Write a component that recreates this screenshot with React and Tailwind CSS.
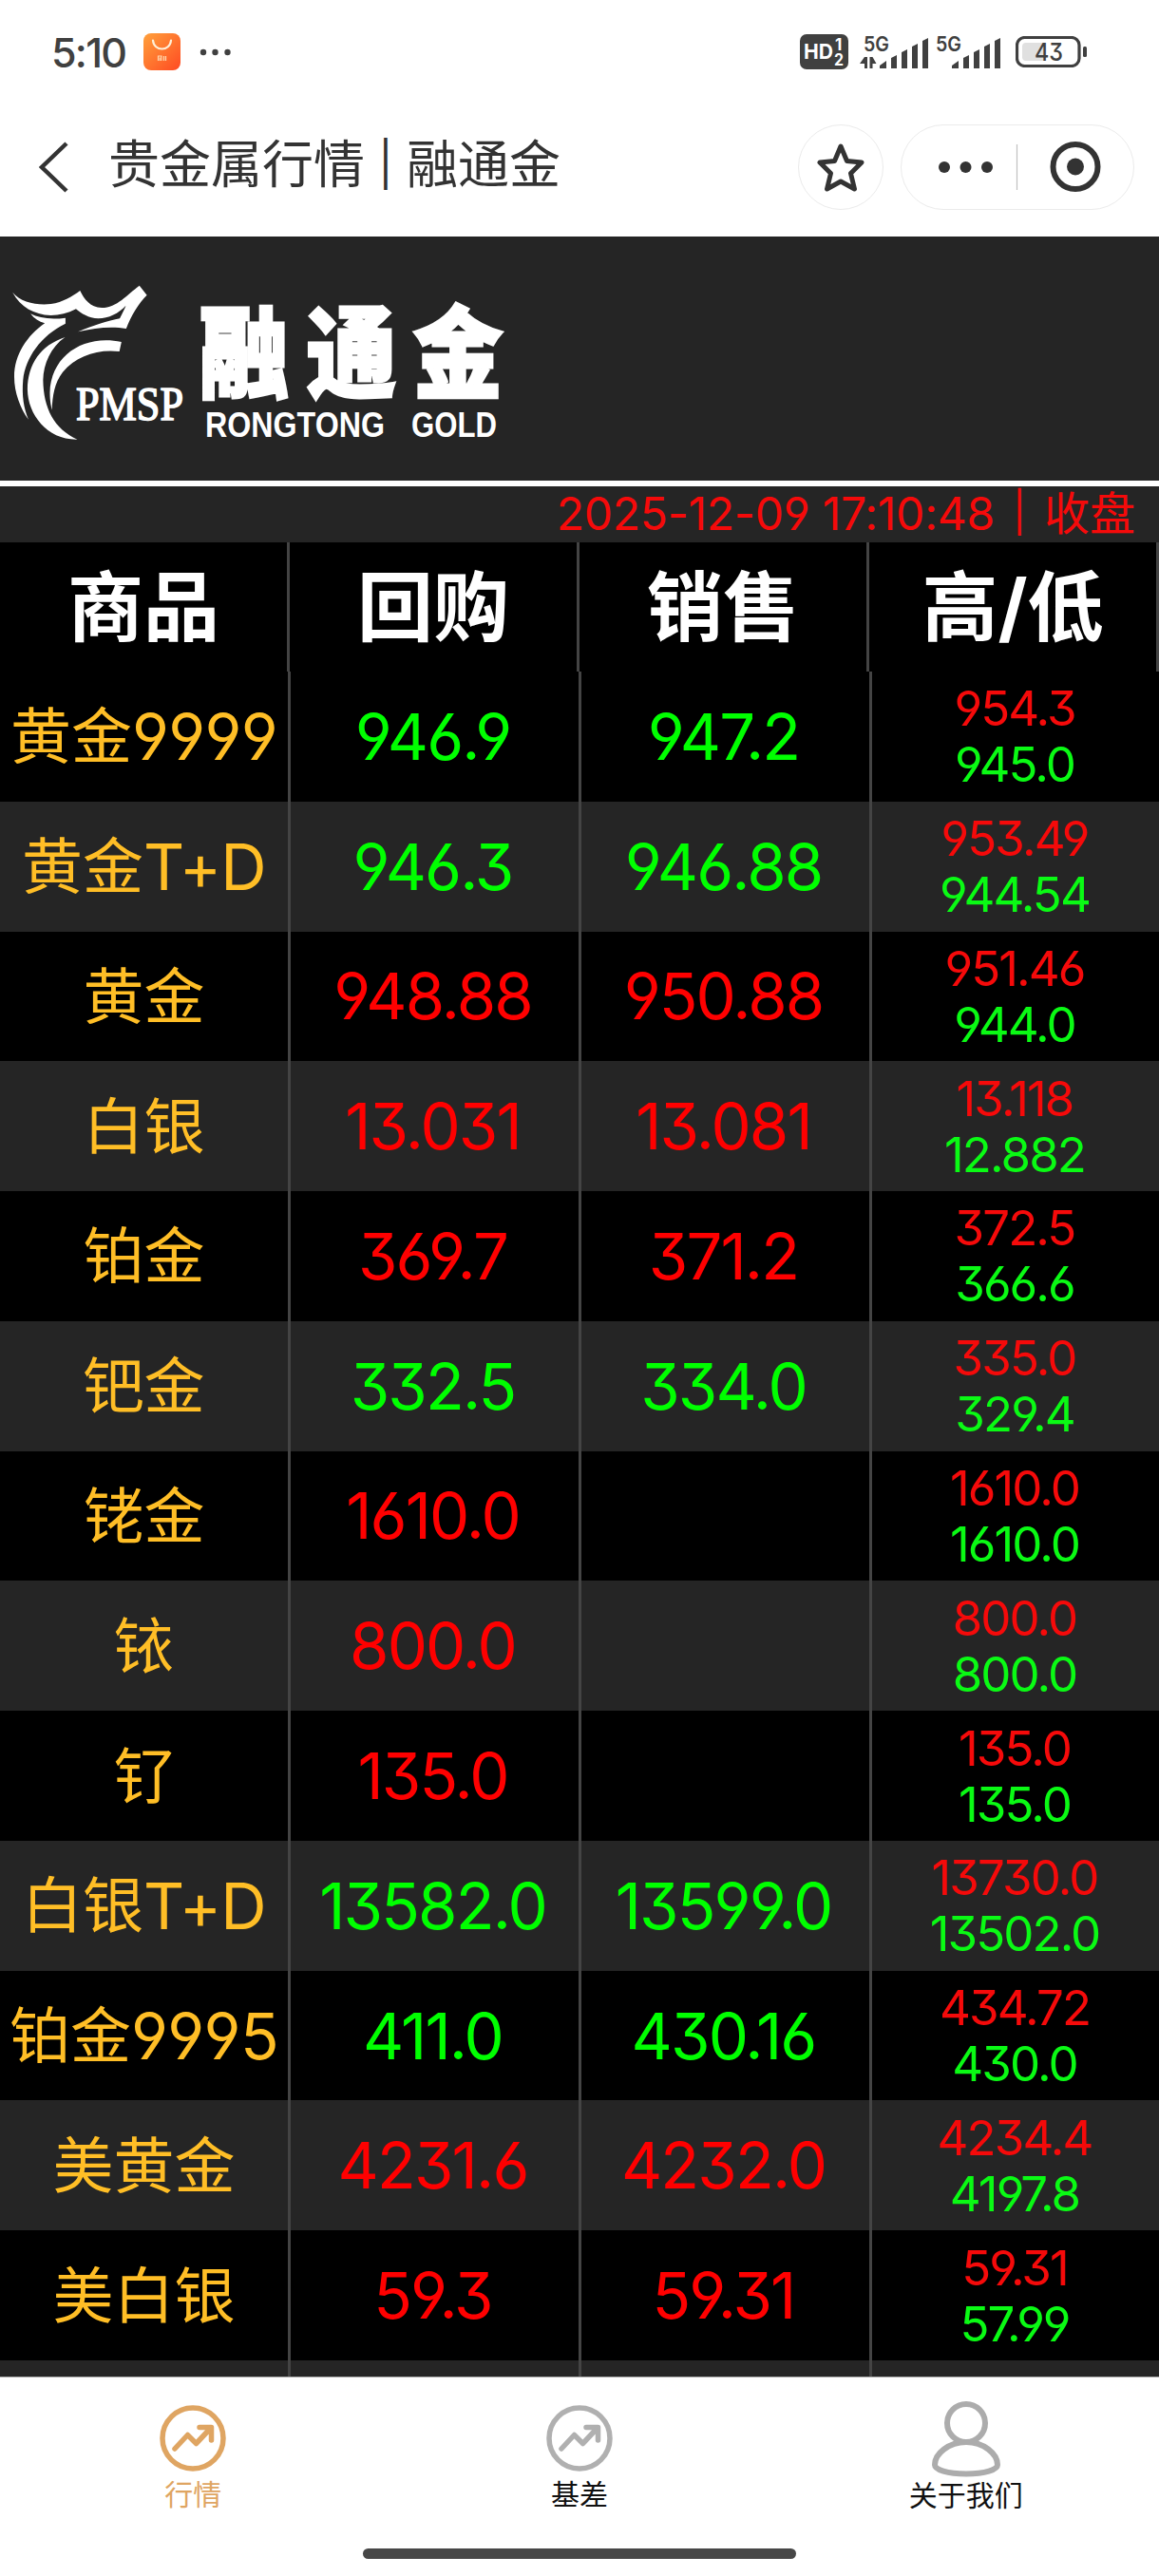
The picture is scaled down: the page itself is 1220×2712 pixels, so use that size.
import React from 'react';

const rows = [
  { name: '黄金', code: '9999', buy: '946.9', sell: '947.2', high: '954.3', low: '945.0', up: false },
  { name: '黄金', code: 'T+D', buy: '946.3', sell: '946.88', high: '953.49', low: '944.54', up: false },
  { name: '黄金', buy: '948.88', sell: '950.88', high: '951.46', low: '944.0', up: true },
  { name: '白银', buy: '13.031', sell: '13.081', high: '13.118', low: '12.882', up: true },
  { name: '铂金', buy: '369.7', sell: '371.2', high: '372.5', low: '366.6', up: true },
  { name: '钯金', buy: '332.5', sell: '334.0', high: '335.0', low: '329.4', up: false },
  { name: '铑金', buy: '1610.0', sell: '', high: '1610.0', low: '1610.0', up: true },
  { name: '铱', buy: '800.0', sell: '', high: '800.0', low: '800.0', up: true },
  { name: '钌', buy: '135.0', sell: '', high: '135.0', low: '135.0', up: true },
  { name: '白银', code: 'T+D', buy: '13582.0', sell: '13599.0', high: '13730.0', low: '13502.0', up: false },
  { name: '铂金', code: '9995', buy: '411.0', sell: '430.16', high: '434.72', low: '430.0', up: false },
  { name: '美黄金', buy: '4231.6', sell: '4232.0', high: '4234.4', low: '4197.8', up: true },
  { name: '美白银', buy: '59.3', sell: '59.31', high: '59.31', low: '57.99', up: true },
  { name: '', buy: '', sell: '', high: '', low: '', up: true },
];

const columns = ['商品', '回购', '销售', '高/低'];

function Signal({ data }) {
  return (
    <svg className="overflow-visible" width="74" height="46" viewBox="0 -4 74 46" fill="#404040">
      <text x="4" y="18" fontSize="22" fontWeight="600" textLength="27" lengthAdjust="spacingAndGlyphs">5G</text>
      {data && (
        <>
          <path d="M8 24v12H5v-5H0l5-7z" />
          <path d="M10.500 36V24h3l4 7H13.500v5z" />
        </>
      )}
      <path d="M21 36v-3l7-5v8zM33 36V25l6-3v14zM44 36V19l6-3v20zM55 36V13l6-3v26zM66 36V7l6-3v32z" />
    </svg>
  );
}

function StatusBar() {
  return (
    <div className="flex h-[105px] items-center pt-1 pl-[54px] pr-[75px] text-[#404040]">
      <span className="mt-0.5 text-[43px] font-medium leading-none tracking-[-0.04em]">5:10</span>
      <svg className="ml-auto" width="39" height="39" viewBox="0 0 39 39">
        <defs>
          <linearGradient id="shop" x1="0" y1="0" x2="1" y2="1">
            <stop offset="0" stopColor="#ffa13c" />
            <stop offset="1" stopColor="#ff4a22" />
          </linearGradient>
        </defs>
        <rect width="39" height="39" rx="8" fill="url(#shop)" />
        <path d="M10 7.500c1 12 18 12 19 0" fill="none" stroke="#fff0d8" strokeWidth="2.200" strokeLinecap="round" />
        <path d="M15.500 29v-5h3.500v5M17.300 25.500V29M21.500 24v5M23.500 24v5" fill="none" stroke="#ffd9b0" strokeWidth="1.200" />
      </svg>
      <svg className="ml-5 mr-[599px]" width="33" height="8" viewBox="0 0 33 8" fill="#404040">
        <circle cx="4" cy="4" r="3.200" />
        <circle cx="16.500" cy="4" r="3.200" />
        <circle cx="29.500" cy="4" r="3.200" />
      </svg>
      <svg width="52" height="38" viewBox="0 0 52 38">
        <rect width="51" height="37" rx="7" fill="#404040" />
        <text x="4" y="26" fontSize="22" fontWeight="700" fill="#fff" textLength="31" lengthAdjust="spacingAndGlyphs">HD</text>
        <text x="37" y="17" fontSize="17" fontWeight="700" fill="#fff">1</text>
        <text x="36" y="33" fontSize="17" fontWeight="700" fill="#fff" textLength="10" lengthAdjust="spacingAndGlyphs">2</text>
      </svg>
      <div className="ml-[11px] flex gap-0.5">
        <Signal data />
        <Signal />
      </div>
      <svg className="ml-3.5" width="76" height="33" viewBox="0 0 76 33">
        <rect x="1.500" y="1.500" width="65.500" height="30" rx="8" fill="#fff" stroke="#404040" strokeWidth="3.200" />
        <path d="M11 7h19v19H11q-4 0-4-4V11q0-4 4-4z" fill="#e0e0e0" />
        <rect x="71" y="11" width="4" height="11" rx="1.500" fill="#404040" />
        <text x="20" y="26" fontSize="26" fontWeight="500" fill="#404040" textLength="30" lengthAdjust="spacingAndGlyphs">43</text>
      </svg>
    </div>
  );
}

function TitleBar() {
  return (
    <div className="flex h-36 items-start pl-10 pr-[26px] pt-[26px]">
      <svg className="mt-[18px]" width="34" height="54" viewBox="0 0 34 54" fill="none" stroke="#333" strokeWidth="4.500">
        <path d="M30 2 4 27l26 25" />
      </svg>
      <h1 className="ml-10 mt-[3px] flex text-[54px] leading-[80px] text-[#333]">
        贵金属行情
        <span className="-mt-0.5 w-[44px] text-center text-[46px]">|</span>
        融通金
      </h1>
      <div className="ml-auto flex size-[90px] items-center justify-center rounded-full border border-[#ebebeb]">
        <svg width="50" height="52" viewBox="0 0 50 52" fill="none" stroke="#333" strokeWidth="5" strokeLinejoin="round">
          <path d="M25 4l6.500 15.500 15.500 1.500-11.500 11.500 4 16.500L25 41l-14.500 8 4-16.500L3 21l15.500-1.500z" />
        </svg>
      </div>
      <div className="ml-[18px] flex h-[90px] w-[246px] items-center rounded-full border border-[#ebebeb]">
        <svg width="244" height="88" viewBox="0 0 244 88" fill="#333">
          <circle cx="45" cy="44" r="6" />
          <circle cx="67.500" cy="44" r="6" />
          <circle cx="90" cy="44" r="6" />
          <path d="M121.500 20v48" stroke="#c0c0c0" strokeWidth="1.200" />
          <circle cx="183" cy="43.500" r="23.500" fill="none" stroke="#333" strokeWidth="6" />
          <circle cx="183" cy="43.500" r="9" />
        </svg>
      </div>
    </div>
  );
}

function Logo() {
  return (
    <svg width="560" height="257" viewBox="0 0 560 257" fill="#fff">
      <g transform="translate(0 1) scale(.3571 .3333)">
        <path d="M37 173C60 205 110 215 150 210C185 205 215 185 236 168C248 195 265 220 300 222C345 222 375 180 411 152L433 182C410 205 385 250 372 288C330 280 280 285 230 298C270 280 320 262 353 256C360 240 368 225 371 215C350 240 320 255 290 256C260 255 240 240 224 226C200 240 175 246 150 246C100 243 60 220 37 173Z" />
        <path d="M90 241C115 255 150 260 193 254L193 272C120 310 75 380 68 450C64 500 70 540 84 575C60 540 42 490 42 440C42 370 80 310 132 271C115 266 100 256 90 241Z" />
        <path d="M192 315C120 340 82 400 81 480C82 560 140 640 228 638C160 605 128 540 127 450C128 400 150 345 192 315Z" />
        <path d="M358 330C250 305 150 370 147 490C147 515 150 530 153 545C155 500 160 460 185 425C225 375 285 352 352 360Z" />
      </g>
      <text className="font-['Liberation_Serif',serif]" x="80" y="193" fontSize="50" stroke="#fff" strokeWidth="1.600" textLength="113" lengthAdjust="spacingAndGlyphs">PMSP</text>
      <text className="font-['Noto_Sans_CJK_SC',sans-serif]" transform="scale(.9 1)" x="233 358.500 483" y="161" fontSize="105" fontWeight="900" stroke="#fff" strokeWidth="3">融通金</text>
      <text className="font-['Liberation_Sans',sans-serif]" x="216" y="210.500" fontSize="37" fontWeight="700" textLength="189" lengthAdjust="spacingAndGlyphs">RONGTONG</text>
      <text className="font-['Liberation_Sans',sans-serif]" x="433" y="210.500" fontSize="37" fontWeight="700" textLength="90" lengthAdjust="spacingAndGlyphs">GOLD</text>
    </svg>
  );
}

function QuoteRow({ row, odd }) {
  const price = row.up ? 'text-[#ff0000]' : 'text-[#00ff00]';
  const cell = 'flex w-[306px] shrink-0 items-center justify-center border-r-3 border-[#444]';
  return (
    <div className={`flex h-[136.770px] shrink-0 ${odd ? 'bg-[#252525]' : 'bg-black'}`}>
      <div className={`${cell} text-[64px] leading-none text-[#ffbe26]`}>
        {row.name}
        {row.code && <span className="text-[67px] tracking-[-0.01em]">{row.code}</span>}
      </div>
      <div className={`${cell} pr-1 text-[67px] leading-none tracking-[-0.028em] ${price}`}>{row.buy}</div>
      <div className={`${cell} pr-1 text-[67px] leading-none tracking-[-0.028em] ${price}`}>{row.sell}</div>
      <div className="flex flex-1 flex-col items-center justify-center pr-0.5 text-[51px] leading-[59px] tracking-[-0.038em]">
        <span className="text-[#f50a0a]">{row.high}</span>
        <span className="text-[#0afa14]">{row.low}</span>
      </div>
    </div>
  );
}

function TrendIcon() {
  return (
    <svg width="70" height="70" viewBox="0 0 70 70" fill="none" stroke="currentColor" strokeWidth="5.500" strokeLinecap="round" strokeLinejoin="round">
      <circle cx="35" cy="35" r="32" />
      <path d="M16 46l13.500-14.500 9 9L54 24M42 23.500h12.500V37" />
    </svg>
  );
}

function UserIcon() {
  return (
    <svg width="72" height="80" viewBox="0 0 72 80" fill="none" stroke="currentColor" strokeWidth="6">
      <ellipse cx="36" cy="23" rx="20" ry="20" />
      <path d="M36 43C18 43 3 55 3 67c0 5 13 9.500 33 9.500S69 72 69 67C69 55 54 43 36 43z" />
    </svg>
  );
}

export default function App() {
  return (
    <div className="flex h-[2712px] w-[1220px] flex-col overflow-hidden bg-white font-[Inter,'Noto_Sans_CJK_SC',sans-serif] [font-feature-settings:'cv03','cv04','cv09']">
      <StatusBar />
      <TitleBar />

      <div className="h-[263px] shrink-0 border-b-6 border-white bg-[#252525]">
        <Logo />
      </div>

      <div className="flex h-[59px] shrink-0 justify-end bg-[#252525] pr-[25px] text-[48px] leading-[58px] text-[#f50a0a]">
        <span className="tracking-[-0.005em]">2025-12-09 17:10:48</span>
        <span className="-mt-0.5 w-[52px] text-center text-[42px]">|</span>
        <span>收盘</span>
      </div>

      {/* Quote table */}
      <div className="flex h-34 shrink-0 bg-black text-[80px] font-bold leading-none text-white">
        {columns.map((c) => (
          <div key={c} className="flex w-[305px] items-center justify-center border-r-3 border-[#444]">{c}</div>
        ))}
      </div>
      <div className="flex min-h-0 flex-1 flex-col overflow-hidden">
        {rows.map((row, i) => (
          <QuoteRow key={i} row={row} odd={i % 2 === 1} />
        ))}
      </div>

      {/* Bottom tabs */}
      <div className="flex h-[181px] shrink-0 border-t border-[#aaa] text-[30px] leading-[36px]">
        <div className="flex flex-1 flex-col items-center pt-[29px] text-[#dfa562]">
          <TrendIcon />
          <span className="mt-1.5">行情</span>
        </div>
        <div className="flex flex-1 flex-col items-center pt-[29px] text-[#b0b0b0]">
          <TrendIcon />
          <span className="mt-1.5 text-[#111]">基差</span>
        </div>
        <div className="flex flex-1 flex-col items-center pt-[25px] text-[#acacac]">
          <UserIcon />
          <span className="mt-px text-[#111]">关于我们</span>
        </div>
      </div>
      <div className="mx-auto mb-[18px] h-[11px] w-[456px] shrink-0 rounded-full bg-[#474747]" />
    </div>
  );
}
